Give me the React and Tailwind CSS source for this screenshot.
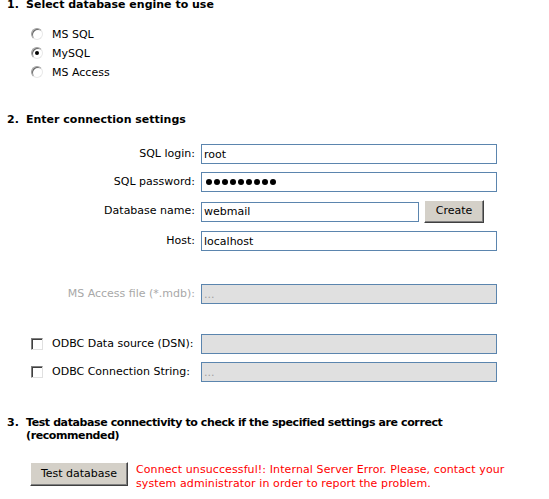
import React from "react";

function Radio({ checked }) {
  return (
    <span className="relative inline-block w-[12px] h-[12px] rounded-full border border-t-[#a0a0a0] border-l-[#a0a0a0] border-r-[#e8e8e8] border-b-[#e8e8e8] bg-white shadow-[inset_1px_1px_0_#696969]">
      {checked && (
        <span className="absolute left-[3px] top-[3px] w-[4px] h-[4px] rounded-full bg-black" />
      )}
    </span>
  );
}

function Checkbox() {
  return (
    <span className="inline-block w-[12px] h-[12px] border border-t-[#808080] border-l-[#808080] border-r-[#e0e0e0] border-b-[#e0e0e0] bg-white shadow-[inset_1px_1px_0_#404040]" />
  );
}

function Input({ value, disabled, password, width = "w-[296px]" }) {
  return (
    <div
      className={`${width} h-[20px] border border-[#5b85ae] flex items-center px-[2px] ${
        disabled ? "bg-[#e0e0e0] text-[#a0a0a0]" : "bg-white text-black"
      }`}
    >
      {password ? (
        <div className="flex gap-[2px] pl-[2px]">
          {Array.from({ length: 9 }).map((_, i) => (
            <span key={i} className="w-[6px] h-[6px] rounded-full bg-black" />
          ))}
        </div>
      ) : (
        <span className="leading-none">{value}</span>
      )}
    </div>
  );
}

function Button({ children, className = "" }) {
  return (
    <div
      className={`bg-[#d4d0c8] border border-t-white border-l-white border-r-[#404040] border-b-[#404040] shadow-[inset_-1px_-1px_0_#808080] flex items-center justify-center text-black ${className}`}
    >
      {children}
    </div>
  );
}

export default function App() {
  return (
    <div className="w-[549px] h-[499px] overflow-hidden bg-white text-black font-['DejaVu_Sans',sans-serif] text-[11px]">
      <div className="-mt-[2px] pl-[7px] flex font-bold leading-[14px]">
        <span className="w-[19px]">1.</span>
        <span>Select database engine to use</span>
      </div>

      <div className="mt-[16px] pl-[31px] flex flex-col gap-[7px]">
        {[
          ["MS SQL", false],
          ["MySQL", true],
          ["MS Access", false],
        ].map(([label, checked]) => (
          <div key={label} className="flex items-center h-[12px]">
            <Radio checked={checked} />
            <span className="ml-[9px] leading-none">{label}</span>
          </div>
        ))}
      </div>

      <div className="mt-[35px] pl-[7px] flex font-bold leading-[14px]">
        <span className="w-[19px]">2.</span>
        <span>Enter connection settings</span>
      </div>

      <div className="mt-[17px] grid grid-cols-[195px_1fr] gap-x-[6px] gap-y-[8px] items-center">
        <span className="text-right">SQL login:</span>
        <Input value="root" />
        <span className="text-right">SQL password:</span>
        <Input password />
        <span className="text-right">Database name:</span>
        <div className="flex items-center gap-[5px]">
          <Input value="webmail" width="w-[218px]" />
          <Button className="w-[60px] h-[23px]">Create</Button>
        </div>
        <span className="text-right">Host:</span>
        <Input value="localhost" />
        <span className="text-right text-[#a8a8a8] mt-[25px]">MS Access file (*.mdb):</span>
        <div className="mt-[25px]">
          <Input value="..." disabled />
        </div>
        <div className="flex items-center pl-[31px] mt-[22px]">
          <Checkbox />
          <span className="ml-[9px]">ODBC Data source (DSN):</span>
        </div>
        <div className="mt-[22px]">
          <Input value="" disabled />
        </div>
        <div className="flex items-center pl-[31px]">
          <Checkbox />
          <span className="ml-[9px]">ODBC Connection String:</span>
        </div>
        <Input value="..." disabled />
      </div>

      <div className="mt-[34px] pl-[7px] flex font-bold leading-[13px]">
        <span className="w-[19px] shrink-0">3.</span>
        <span className="w-[470px] tracking-[-0.4px]">
          Test database connectivity to check if the specified settings are correct (recommended)
        </span>
      </div>

      <div className="mt-[20px] pl-[30px] flex items-start gap-[8px]">
        <Button className="w-[98px] h-[24px]">Test database</Button>
        <p className="text-[#ff0000] leading-[14px] w-[390px] mt-[1px] tracking-[0.1px]">
          Connect unsuccessful!: Internal Server Error. Please, contact your system administrator in order to report the problem.
        </p>
      </div>
    </div>
  );
}
